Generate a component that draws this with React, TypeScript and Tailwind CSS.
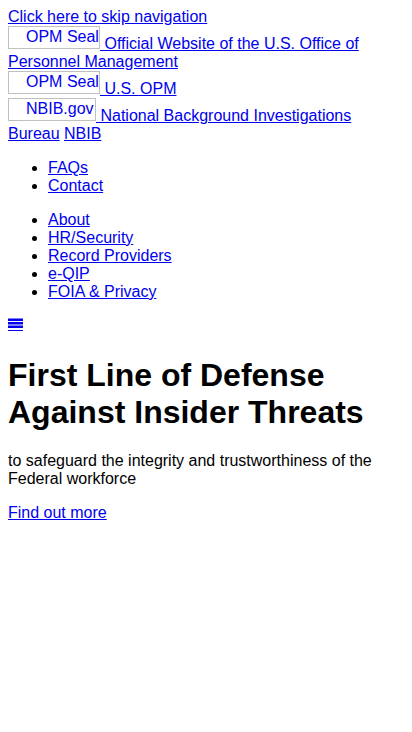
const link = 'text-[#0000ee] underline';

function AltImg({ alt, w }: { alt: string; w: string }) {
  return (
    <span
      className={`inline-block ${w} h-[23px] overflow-hidden whitespace-nowrap border border-[#c0c0c0] pl-[17px] pt-[1px] align-baseline`}
    >
      {alt}
    </span>
  );
}

export default function App() {
  return (
    <div className="m-2 font-['Liberation_Sans',Arial,sans-serif] text-base leading-[normal] text-black bg-white">
      <div>
        <a href="#main" className={link}>
          Click here to skip navigation
        </a>
      </div>
      <div>
        <a href="#" className={link}>
          <AltImg alt="OPM Seal" w="w-[92px]" /> Official Website of the U.S. Office of Personnel Management
        </a>
      </div>
      <div>
        <a href="#" className={link}>
          <AltImg alt="OPM Seal" w="w-[92px]" /> U.S. OPM
        </a>
      </div>
      <div>
        <a href="#" className={link}>
          <AltImg alt="NBIB.gov" w="w-[88px]" /> National Background Investigations Bureau
        </a>{' '}
        <a href="#" className={link}>
          NBIB
        </a>
      </div>

      <ul className="my-4 list-disc pl-10">
        <li>
          <a href="#" className={link}>FAQs</a>
        </li>
        <li>
          <a href="#" className={link}>Contact</a>
        </li>
      </ul>
      <ul className="my-4 list-disc pl-10">
        <li>
          <a href="#" className={link}>About</a>
        </li>
        <li>
          <a href="#" className={link}>HR/Security</a>
        </li>
        <li>
          <a href="#" className={link}>Record Providers</a>
        </li>
        <li>
          <a href="#" className={link}>e-QIP</a>
        </li>
        <li>
          <a href="#" className={link}>FOIA &amp; Privacy</a>
        </li>
      </ul>

      <div className="h-[18.4px]">
        <a href="#" aria-label="Menu" className="inline-block pt-[1px]">
          <svg width="15" height="14" viewBox="0 0 15 14" className="block">
            <rect x="0" y="0.5" width="15" height="2.5" fill="#0000ee" />
            <rect x="0" y="4" width="15" height="2.5" fill="#0000ee" />
            <rect x="0" y="7.5" width="15" height="2.5" fill="#0000ee" />
            <rect x="0" y="12" width="15" height="1" fill="#0000ee" />
          </svg>
        </a>
      </div>

      <main id="main">
        <h1 className="my-[21.44px] text-[32px] font-bold leading-[normal]">
          First Line of Defense Against Insider Threats
        </h1>
        <p className="my-4">to safeguard the integrity and trustworthiness of the Federal workforce</p>
        <p className="my-4">
          <a href="#" className={link}>Find out more</a>
        </p>
      </main>
    </div>
  );
}
